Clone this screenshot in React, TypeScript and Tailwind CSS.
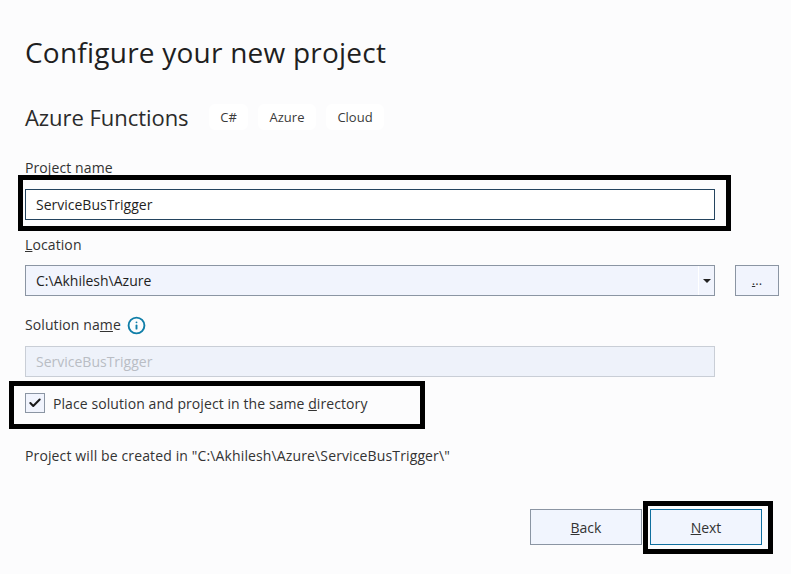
import React from 'react';
import { Check, Info } from 'lucide-react';

const font = "font-['Open_Sans','Noto_Sans',sans-serif]";

const Tag: React.FC<{ label: string; width: string }> = ({ label, width }) => (
  <span className={`flex h-[26px] items-center justify-center rounded-md bg-white pt-[2px] text-[13px] text-[#3b3b3b] ${width}`}>{label}</span>
);

const Label: React.FC<{ children: React.ReactNode }> = ({ children }) => (
  <div className="h-5 text-[14px] leading-5 tracking-[0.1px] text-[#333]">{children}</div>
);

export default function App() {
  return (
    <div className={`relative flex h-[574px] w-[791px] flex-col overflow-hidden bg-[#fcfcfd] pl-[25px] ${font}`}>
      <h1 className="mt-[33px] h-[38px] text-[28px] leading-[38px] tracking-[0.23px] text-[#1f1f1f]">Configure your new project</h1>

      <div className="mt-[31px] flex h-[30px] items-center">
        <h2 className="w-[184px] text-[22px] tracking-[-0.05px] text-[#2b2b2b]">Azure Functions</h2>
        <div className="flex gap-[10px]">
          <Tag label="C#" width="w-[39px]" />
          <Tag label="Azure" width="w-[58px]" />
          <Tag label="Cloud" width="w-[58px]" />
        </div>
      </div>

      <div className="mt-[26px]">
        <Label>Project name</Label>
      </div>
      <div className="mt-[11px] flex h-[31px] w-[690px] items-center border border-[#24445f] bg-white pl-[10px] text-[14px] text-[#1f1f1f]">
        ServiceBusTrigger
      </div>

      <div className="mt-[15px]">
        <Label><span className="underline">L</span>ocation</Label>
      </div>
      <div className="mt-[10px] flex h-[31px] items-center">
        <div className="flex h-full w-[690px] items-center border border-[#8b95a3] bg-[#f1f4fd] text-[14px] text-[#1f1f1f]">
          <span className="flex-1 pl-[10px]">C:\Akhilesh\Azure</span>
          <span className="flex h-full w-4 items-center justify-center border-l border-white">
            <span className="h-0 w-0 border-x-[4px] border-t-[4px] border-x-transparent border-t-[#222]" />
          </span>
        </div>
        <div className="ml-5 flex h-full w-[44px] items-center justify-center border border-[#8b95a3] bg-[#f1f4fd] text-[13px] text-[#333]">
          <span><span className="underline">.</span>..</span>
        </div>
      </div>

      <div className="mt-[19px] flex items-center gap-[6px]">
        <Label>Solution na<span className="underline">m</span>e</Label>
        <Info size={19} strokeWidth={2.4} className="text-[#0f7ea8]" />
      </div>
      <div className="mt-[11px] flex h-[31px] w-[690px] items-center border border-[#c9ced6] bg-[#eef2fa] pl-[10px] text-[14px] text-[#b9bdc4]">
        ServiceBusTrigger
      </div>

      <div className="mt-[16px] flex h-5 items-center">
        <span className="flex h-5 w-5 items-center justify-center border border-[#8b95a3] bg-[#f1f4fd]">
          <Check size={14} strokeWidth={3.5} className="text-[#1a1a1a]" />
        </span>
        <span className="ml-2 text-[14px] tracking-[0.08px] text-[#333]">
          Place solution and project in the same <span className="underline">d</span>irectory
        </span>
      </div>

      <div className="mt-[33px] h-5 text-[14px] leading-5 tracking-[0.13px] text-[#333]">
        Project will be created in "C:\Akhilesh\Azure\ServiceBusTrigger\"
      </div>

      <div className="mt-[43px] flex w-[737px] justify-end gap-2">
        <button className="h-[36px] w-[112px] border border-[#8b95a3] bg-[#f1f5fe] text-[14px] text-[#333]">
          <span className="underline">B</span>ack
        </button>
        <button className="h-[36px] w-[112px] border border-[#0f6f9f] bg-[#f1f5fe] text-[14px] text-[#333]">
          <span className="underline">N</span>ext
        </button>
      </div>

      {/* annotation boxes drawn over the dialog */}
      <div className="absolute left-[18px] top-[175px] h-[56px] w-[713px] border-[5px] border-black" />
      <div className="absolute left-[9px] top-[381px] h-[48px] w-[416px] border-[5px] border-black" />
      <div className="absolute left-[643px] top-[501px] h-[53px] w-[130px] border-[5px] border-black" />
    </div>
  );
}
